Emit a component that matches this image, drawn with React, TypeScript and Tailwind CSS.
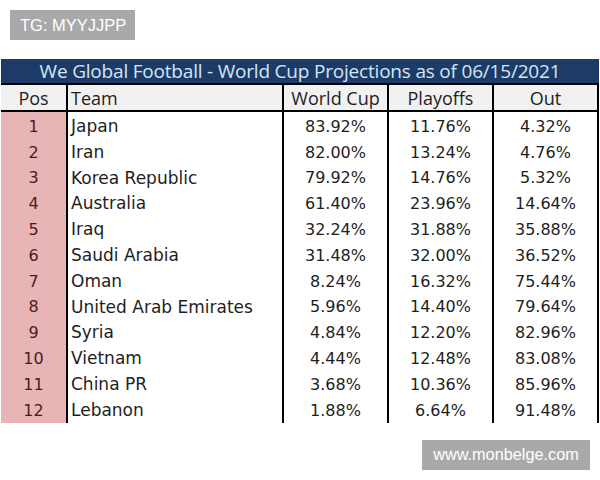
const rows: [string, string, string, string, string][] = [
  ["1", "Japan", "83.92%", "11.76%", "4.32%"],
  ["2", "Iran", "82.00%", "13.24%", "4.76%"],
  ["3", "Korea Republic", "79.92%", "14.76%", "5.32%"],
  ["4", "Australia", "61.40%", "23.96%", "14.64%"],
  ["5", "Iraq", "32.24%", "31.88%", "35.88%"],
  ["6", "Saudi Arabia", "31.48%", "32.00%", "36.52%"],
  ["7", "Oman", "8.24%", "16.32%", "75.44%"],
  ["8", "United Arab Emirates", "5.96%", "14.40%", "79.64%"],
  ["9", "Syria", "4.84%", "12.20%", "82.96%"],
  ["10", "Vietnam", "4.44%", "12.48%", "83.08%"],
  ["11", "China PR", "3.68%", "10.36%", "85.96%"],
  ["12", "Lebanon", "1.88%", "6.64%", "91.48%"],
];

const cols = "grid grid-cols-[67px_216px_105px_105px_105px]";

const App = () => {
  return (
    <div className="w-[600px] h-[480px] bg-white flex flex-col overflow-hidden font-['DejaVu_Sans',sans-serif]">
      <div className="pl-[10px] pt-[10px]">
        <div className="w-[125px] h-[30px] bg-[#a9a9a9] text-white text-[16.5px] font-['Liberation_Sans',sans-serif] flex items-center pl-[10px]">
          TG: MYYJJPP
        </div>
      </div>

      <div className="mt-[19px] ml-[1px] w-[598px] text-[#1e1e1e]">
        <div className="h-[26px] bg-[#1c3b66] border-b-2 border-black flex items-center justify-center text-[#d4e6f7] text-[19px] font-['Open_Sans',sans-serif] tracking-[-0.2px]">
          We Global Football - World Cup Projections as of 06/15/2021
        </div>
        <div className={`${cols} h-[27px] bg-[#f1f1f1] border-b-2 border-black text-[18px] font-['Open_Sans',sans-serif]`}>
          <div className="border-r-2 border-black flex items-center justify-center">Pos</div>
          <div className="border-r-2 border-black flex items-center pl-[3px]">Team</div>
          <div className="border-r-2 border-black flex items-center justify-center">World Cup</div>
          <div className="border-r-2 border-black flex items-center justify-center">Playoffs</div>
          <div className="border-r-2 border-black flex items-center justify-center">Out</div>
        </div>
        {rows.map((r) => (
          <div key={r[0]} className={`${cols} h-[25.8px] text-[16px]`}>
            <div className="bg-[#e7b5b6] border-r-2 border-black flex items-center justify-center pt-[2px] text-[#4a1c1c]">{r[0]}</div>
            <div className="border-r-2 border-black flex items-center pl-[3px] pt-[2px] text-[17px]">{r[1]}</div>
            <div className="border-r-2 border-black flex items-center justify-center pt-[2px]">{r[2]}</div>
            <div className="border-r-2 border-black flex items-center justify-center pt-[2px]">{r[3]}</div>
            <div className="border-r-2 border-black flex items-center justify-center pt-[2px]">{r[4]}</div>
          </div>
        ))}
      </div>

      <div className="flex justify-end pr-[10px] mt-[18px]">
        <div className="w-[168px] h-[30px] bg-[#a9a9a9] text-white text-[16.3px] font-['Liberation_Sans',sans-serif] flex items-center justify-center">
          www.monbelge.com
        </div>
      </div>
    </div>
  );
};

export default App;
